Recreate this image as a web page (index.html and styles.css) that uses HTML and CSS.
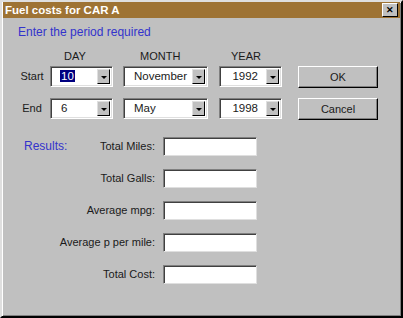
FILE: index.html
```html
<!DOCTYPE html>
<html>
<head>
	<title>Fuel costs for CAR A</title>
	<meta charset="utf-8">
	<link rel="stylesheet" href="styles.css">
</head>
<body>
<div class="window">
	<div class="titlebar">
		<span class="title">Fuel costs for CAR A</span>
		<span class="close">&#x2715;</span>
	</div>

	<div class="heading">Enter the period required</div>

	<!-- period selection -->
	<div class="period">
		<div class="row head">
			<span class="lbl"></span>
			<span class="col-day">DAY</span>
			<span class="col-month">MONTH</span>
			<span class="col-year">YEAR</span>
		</div>
		<div class="row">
			<span class="lbl">Start</span>
			<div class="combo day"><span class="val"><span class="sel">10</span></span><span class="drop"></span></div>
			<div class="combo month"><span class="val">November</span><span class="drop"></span></div>
			<div class="combo year"><span class="val right">1992</span><span class="drop"></span></div>
			<div class="btn">OK</div>
		</div>
		<div class="row">
			<span class="lbl">End</span>
			<div class="combo day"><span class="val">6</span><span class="drop"></span></div>
			<div class="combo month"><span class="val">May</span><span class="drop"></span></div>
			<div class="combo year"><span class="val right">1998</span><span class="drop"></span></div>
			<div class="btn">Cancel</div>
		</div>
	</div>

	<!-- results -->
	<div class="results">
		<div class="rlabel"><span class="blue">Results:</span><span>Total Miles:</span></div>
		<div class="field"></div>
		<div class="rlabel"><span>Total Galls:</span></div>
		<div class="field"></div>
		<div class="rlabel"><span>Average mpg:</span></div>
		<div class="field"></div>
		<div class="rlabel"><span>Average p per mile:</span></div>
		<div class="field"></div>
		<div class="rlabel"><span>Total Cost:</span></div>
		<div class="field"></div>
	</div>
</div>
</body>
</html>
```

FILE: styles.css
```css
body {
	margin: 0;
	font-family: "Liberation Sans", Arial, sans-serif;
	font-size: 11px;
	color: #1a1a1a;
}
.window {
	box-sizing: border-box;
	width: 403px;
	height: 318px;
	background-color: #c0c0c0;
	border-style: solid;
	border-width: 2px;
	border-color: #dfdfdf #000 #000 #dfdfdf;
	box-shadow: inset 1px 1px 0 #fff, inset -1px -1px 0 #808080;
}
.titlebar {
	height: 16px;
	margin: 0 1px;
	background-color: #9e7334;
	display: flex;
	align-items: center;
	justify-content: space-between;
	padding: 0 2px 0 2px;
}
.title {
	color: #fff;
	font-weight: bold;
	font-size: 11.5px;
}
.close {
	box-sizing: border-box;
	width: 16px;
	height: 14px;
	background-color: #c0c0c0;
	border: 1px solid;
	border-color: #fff #000 #000 #fff;
	font-size: 9px;
	font-weight: bold;
	line-height: 12px;
	text-align: center;
	color: #000;
}
.heading {
	color: #3333cc;
	font-size: 12px;
	line-height: 14px;
	margin: 7px 0 0 16px;
}
.period {
	margin-top: 11px;
}
.row {
	display: flex;
	align-items: flex-start;
	height: 22px;
	margin-bottom: 10px;
}
.row.head {
	height: 13px;
	line-height: 13px;
	margin-bottom: 3px;
}
.lbl {
	box-sizing: border-box;
	width: 48px;
	padding-left: 12px;
	text-align: center;
	line-height: 20px;
}
.col-day {
	width: 73px;
	padding-left: 14px;
	box-sizing: border-box;
}
.col-month {
	width: 96px;
	padding-left: 17px;
	box-sizing: border-box;
}
.col-year {
	padding-left: 12px;
}
.combo {
	box-sizing: border-box;
	height: 21px;
	display: flex;
	background-color: #fff;
	border: 1px solid;
	border-color: #808080 #fff #fff #808080;
	box-shadow: inset 1px 1px 0 #404040, inset -1px -1px 0 #dfdfdf;
	padding: 2px;
	font-size: 11.5px;
}
.combo.day { width: 63px; }
.combo.month { width: 85px; margin-left: 10px; }
.combo.year { width: 63px; margin-left: 11px; }
.val {
	flex: 1;
	line-height: 15px;
	padding-left: 8px;
}
.val.right {
	text-align: right;
	padding-right: 8px;
}
.sel {
	background-color: #000080;
	color: #fff;
	padding: 0 1px;
	margin-left: -1px;
}
.drop {
	box-sizing: border-box;
	width: 13px;
	height: 15px;
	background-color: #c0c0c0;
	border: 1px solid;
	border-color: #dfdfdf #000 #000 #dfdfdf;
	position: relative;
}
.drop:after {
	content: '';
	position: absolute;
	left: 3px;
	top: 6px;
	border-style: solid;
	border-width: 3px 3px 0 3px;
	border-color: #000 transparent transparent transparent;
}
.btn {
	box-sizing: border-box;
	width: 80px;
	height: 22px;
	margin-left: 16px;
	background-color: #c0c0c0;
	border: 1px solid;
	border-color: #fff #000 #000 #fff;
	box-shadow: inset -1px -1px 0 #808080;
	text-align: center;
	line-height: 20px;
}
.results {
	display: grid;
	grid-template-columns: 131px 94px;
	column-gap: 8px;
	row-gap: 13px;
	padding-left: 22px;
	margin-top: 17px;
}
.rlabel {
	display: flex;
	justify-content: flex-end;
	line-height: 19px;
}
.rlabel .blue {
	color: #3333cc;
	font-size: 12px;
	margin-right: auto;
}
.field {
	box-sizing: border-box;
	height: 19px;
	background-color: #fff;
	border: 1px solid;
	border-color: #808080 #dfdfdf #dfdfdf #808080;
	box-shadow: inset 1px 1px 0 #404040;
}
```
